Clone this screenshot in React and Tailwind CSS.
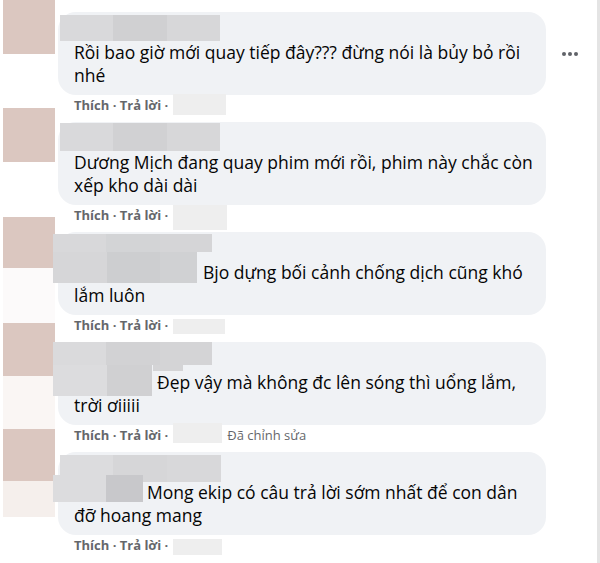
import React from "react";

const comments = [
  {
    avatar: "mt-[-12px]",
    blocks: [["h-[54px]", "bg-[#dbc7c0]"]],
    lines: ["Rồi bao giờ mới quay tiếp đây??? đừng nói là bủy bỏ rồi", "nhé"],
    indent: "",
    box: "w-[53px] h-[21px] mt-[-3px]",
    edited: false,
    more: true,
  },
  {
    avatar: "mt-[-14px]",
    blocks: [["h-[54px]", "bg-[#dbc7c0]"]],
    lines: ["Dương Mịch đang quay phim mới rồi, phim này chắc còn", "xếp kho dài dài"],
    indent: "",
    box: "w-[54px] h-[25px] mt-[2px]",
    edited: false,
    more: false,
  },
  {
    avatar: "mt-[-15px]",
    blocks: [["h-[51px]", "bg-[#dbc7c0]"], ["h-[55px]", "bg-[#fcfafa]"]],
    lines: ["Bjo dựng bối cảnh chống dịch cũng khó", "lắm luôn"],
    indent: "indent-[129px]",
    box: "w-[52px] h-[15px] mt-[1px]",
    edited: false,
    more: false,
  },
  {
    avatar: "mt-[-19px]",
    blocks: [["h-[53px]", "bg-[#dbc7c0]"], ["h-[54px]", "bg-[#faf6f4]"]],
    lines: ["Đẹp vậy mà không đc lên sóng thì uổng lắm,", "trời ơiiiii"],
    indent: "indent-[83px]",
    box: "w-[49px] h-[20px] mt-[-6px]",
    edited: true,
    more: false,
  },
  {
    avatar: "mt-[-23px]",
    blocks: [["h-[52px]", "bg-[#dbc7c0]"], ["h-[36px]", "bg-[#f5efec]"]],
    lines: ["Mong ekip có câu trả lời sớm nhất để con dân", "đỡ hoang mang"],
    indent: "indent-[73px]",
    box: "w-[49px] h-[16px] mt-[1px]",
    edited: false,
    more: false,
  },
];

const redactions = [
  // comment 1
  "left-[60px] top-[15px] w-[53px] h-[26px] bg-[#d9d9db]",
  "left-[113px] top-[15px] w-[54px] h-[26px] bg-[#d0d0d2]",
  "left-[167px] top-[15px] w-[53px] h-[26px] bg-[#d7d7d9]",
  // comment 2
  "left-[60px] top-[123px] w-[53px] h-[28px] bg-[#d9d9db]",
  "left-[113px] top-[123px] w-[54px] h-[28px] bg-[#d1d1d3]",
  "left-[167px] top-[123px] w-[53px] h-[28px] bg-[#d7d7d9]",
  // comment 3
  "left-[53px] top-[234px] w-[53px] h-[18px] bg-[#d8d8da]",
  "left-[106px] top-[234px] w-[54px] h-[18px] bg-[#d3d4d6]",
  "left-[160px] top-[234px] w-[52px] h-[18px] bg-[#d5d5d7]",
  "left-[53px] top-[252px] w-[54px] h-[31px] bg-[#d6d6d8]",
  "left-[107px] top-[252px] w-[53px] h-[31px] bg-[#cdced0]",
  "left-[160px] top-[252px] w-[37px] h-[31px] bg-[#d0d1d3]",
  // comment 4
  "left-[53px] top-[342px] w-[53px] h-[23px] bg-[#dadadc]",
  "left-[106px] top-[342px] w-[54px] h-[23px] bg-[#d2d2d4]",
  "left-[160px] top-[342px] w-[52px] h-[23px] bg-[#d4d4d6]",
  "left-[153px] top-[365px] w-[30px] h-[6px] bg-[#d4d4d6]",
  "left-[53px] top-[365px] w-[54px] h-[31px] bg-[#dcdcde]",
  "left-[107px] top-[365px] w-[45px] h-[31px] bg-[#d0d0d2]",
  // comment 5
  "left-[60px] top-[455px] w-[53px] h-[27px] bg-[#dcdcde]",
  "left-[113px] top-[455px] w-[54px] h-[27px] bg-[#d6d6d8]",
  "left-[167px] top-[455px] w-[54px] h-[27px] bg-[#d8d8da]",
  "left-[53px] top-[475px] w-[53px] h-[27px] bg-[#dcdcde]",
  "left-[106px] top-[475px] w-[37px] h-[27px] bg-[#c8c8cb]",
];

function Dots() {
  return (
    <div className="flex items-center gap-[2px] ml-[16px]">
      <span className="w-[4px] h-[4px] rounded-full bg-[#606368]" />
      <span className="w-[4px] h-[4px] rounded-full bg-[#606368]" />
      <span className="w-[4px] h-[4px] rounded-full bg-[#606368]" />
    </div>
  );
}

function Comment({ c }) {
  return (
    <div className="flex h-[110px]">
      <div className={`w-[52px] ml-[3px] mr-[3px] flex flex-col shrink-0 ${c.avatar}`}>
        {c.blocks.map(([h, bg], i) => (
          <div key={i} className={`w-full ${h} ${bg}`} />
        ))}
      </div>
      <div className="flex flex-col">
        <div className="flex items-center">
          <div className="w-[488px] h-[83px] rounded-[18px] bg-[#f0f2f5] pl-[16px] pt-[29px]">
            <p className={`text-[17.5px] leading-[23px] text-[#050505] whitespace-nowrap ${c.indent}`}>
              {c.lines[0]}
            </p>
            <p className="text-[17.5px] leading-[23px] text-[#050505] whitespace-nowrap">{c.lines[1]}</p>
          </div>
          {c.more && <Dots />}
        </div>
        <div className="flex items-center h-[16px] mt-[3px] pl-[16px] text-[13px] text-[#65676b]">
          <span className="font-bold">Thích · Trả lời ·</span>
          <span className={`ml-[5px] bg-[#eeeeee] shrink-0 ${c.box}`} />
          {c.edited && <span className="ml-[5px]">Đã chỉnh sửa</span>}
        </div>
      </div>
    </div>
  );
}

export default function App() {
  return (
    <div
      className="relative w-[600px] h-[563px] overflow-hidden bg-white border-r-[3px] border-[#e4e4e4] pt-[12px]"
      style={{ fontFamily: '"Open Sans", "Noto Sans", sans-serif' }}
    >
      {comments.map((c, i) => (
        <Comment key={i} c={c} />
      ))}
      {redactions.map((r, i) => (
        <div key={i} className={`absolute ${r}`} />
      ))}
    </div>
  );
}
